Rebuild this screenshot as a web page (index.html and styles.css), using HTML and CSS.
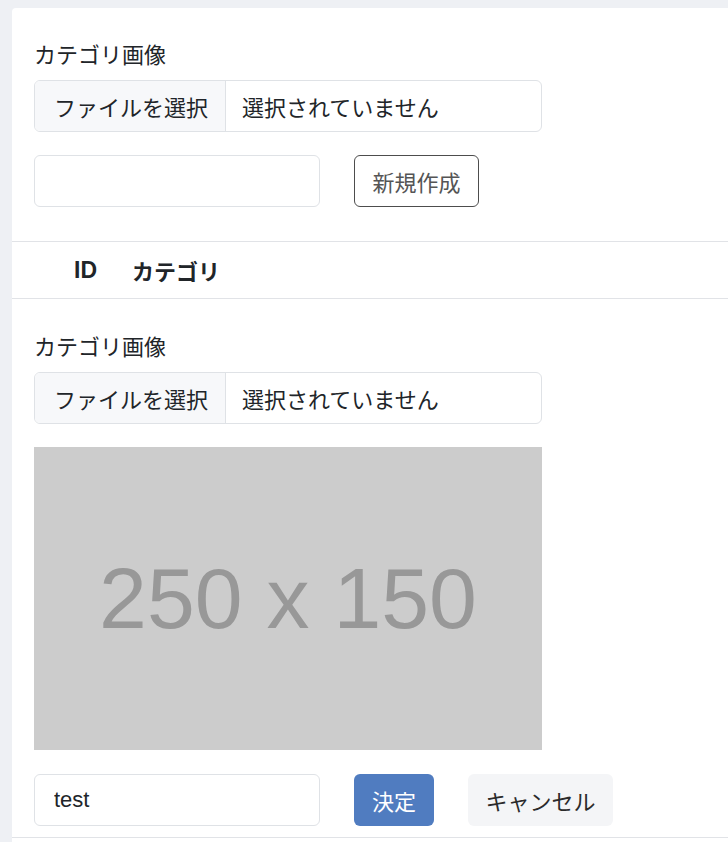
FILE: index.html
```html
<!DOCTYPE html>
<html lang="ja">
<head>
<meta charset="utf-8">
<link rel="stylesheet" href="styles.css">
</head>
<body>
<div class="card">
  <section class="form-block">
    <div class="label">カテゴリ画像</div>
    <div class="file-input">
      <span class="file-btn">ファイルを選択</span>
      <span class="file-name">選択されていません</span>
    </div>
    <div class="row">
      <input class="text-input" type="text" value="">
      <button class="btn btn-outline">新規作成</button>
    </div>
  </section>
  <div class="table-head">
    <span class="th th-id">ID</span>
    <span class="th">カテゴリ</span>
  </div>
  <section class="form-block edit">
    <div class="label">カテゴリ画像</div>
    <div class="file-input">
      <span class="file-btn">ファイルを選択</span>
      <span class="file-name">選択されていません</span>
    </div>
    <div class="placeholder"><span>250 x 150</span></div>
    <div class="row">
      <input class="text-input" type="text" value="test">
      <button class="btn btn-primary">決定</button>
      <button class="btn btn-light">キャンセル</button>
    </div>
  </section>
</div>
</body>
</html>
```

FILE: styles.css
```css
* { box-sizing: border-box; }
html, body {
  margin: 0;
  padding: 0;
  background: #eef0f4;
}
body {
  font-family: "Liberation Sans", "Noto Sans CJK JP", sans-serif;
  font-size: 22px;
  color: #212529;
  padding: 8px 0 0 12px;
}
.card {
  background: #ffffff;
  border-top-left-radius: 4px;
  min-height: 900px;
}
.form-block {
  padding: 33px 0 34px 22px;
  border-bottom: 1px solid #e1e3e7;
}
.form-block.edit {
  padding-top: 34px;
  padding-bottom: 11px;
}
.label {
  line-height: 30px;
  height: 30px;
  margin-bottom: 9px;
}
.file-input {
  display: flex;
  width: 508px;
  height: 52px;
  border: 1px solid #dfe2e6;
  border-radius: 6px;
  overflow: hidden;
}
.file-btn {
  display: flex;
  align-items: center;
  width: 191px;
  padding-left: 19px;
  background: #f7f8fa;
  border-right: 1px solid #dfe2e6;
  color: #212529;
}
.file-name {
  display: flex;
  align-items: center;
  padding-left: 16px;
  color: #212529;
}
.row {
  display: flex;
  align-items: center;
  gap: 34px;
  margin-top: 23px;
}
.text-input {
  width: 286px;
  height: 52px;
  margin: 0;
  padding: 0 19px;
  border: 1px solid #dfe2e6;
  border-radius: 6px;
  font-family: "Liberation Sans", "Noto Sans CJK JP", sans-serif;
  font-size: 22px;
  color: #212529;
  background: #fff;
  outline: none;
}
.btn {
  height: 52px;
  margin: 0;
  border-radius: 6px;
  font-family: "Liberation Sans", "Noto Sans CJK JP", sans-serif;
  font-size: 22px;
  cursor: pointer;
}
.btn-outline {
  width: 125px;
  padding: 0;
  background: #fff;
  border: 1px solid #4d4d4d;
  color: #555555;
}
.btn-primary {
  width: 80px;
  padding: 0;
  background: #507cc0;
  border: none;
  color: #ffffff;
}
.btn-light {
  width: 145px;
  padding: 0;
  background: #f4f5f7;
  border: none;
  color: #2b2b2b;
}
.table-head {
  display: flex;
  align-items: center;
  gap: 35px;
  height: 57px;
  padding-left: 62px;
  border-bottom: 1px solid #e1e3e7;
}
.th {
  font-weight: bold;
  color: #212529;
}
.th-id {
  font-size: 23px;
}
.placeholder {
  display: flex;
  align-items: center;
  justify-content: center;
  width: 508px;
  height: 303px;
  margin-top: 23px;
  background: #cccccc;
}
.placeholder span {
  font-family: "Liberation Sans", sans-serif;
  font-size: 86px;
  color: #989898;
  filter: blur(0.6px);
}
.edit .row {
  margin-top: 24px;
}
```
